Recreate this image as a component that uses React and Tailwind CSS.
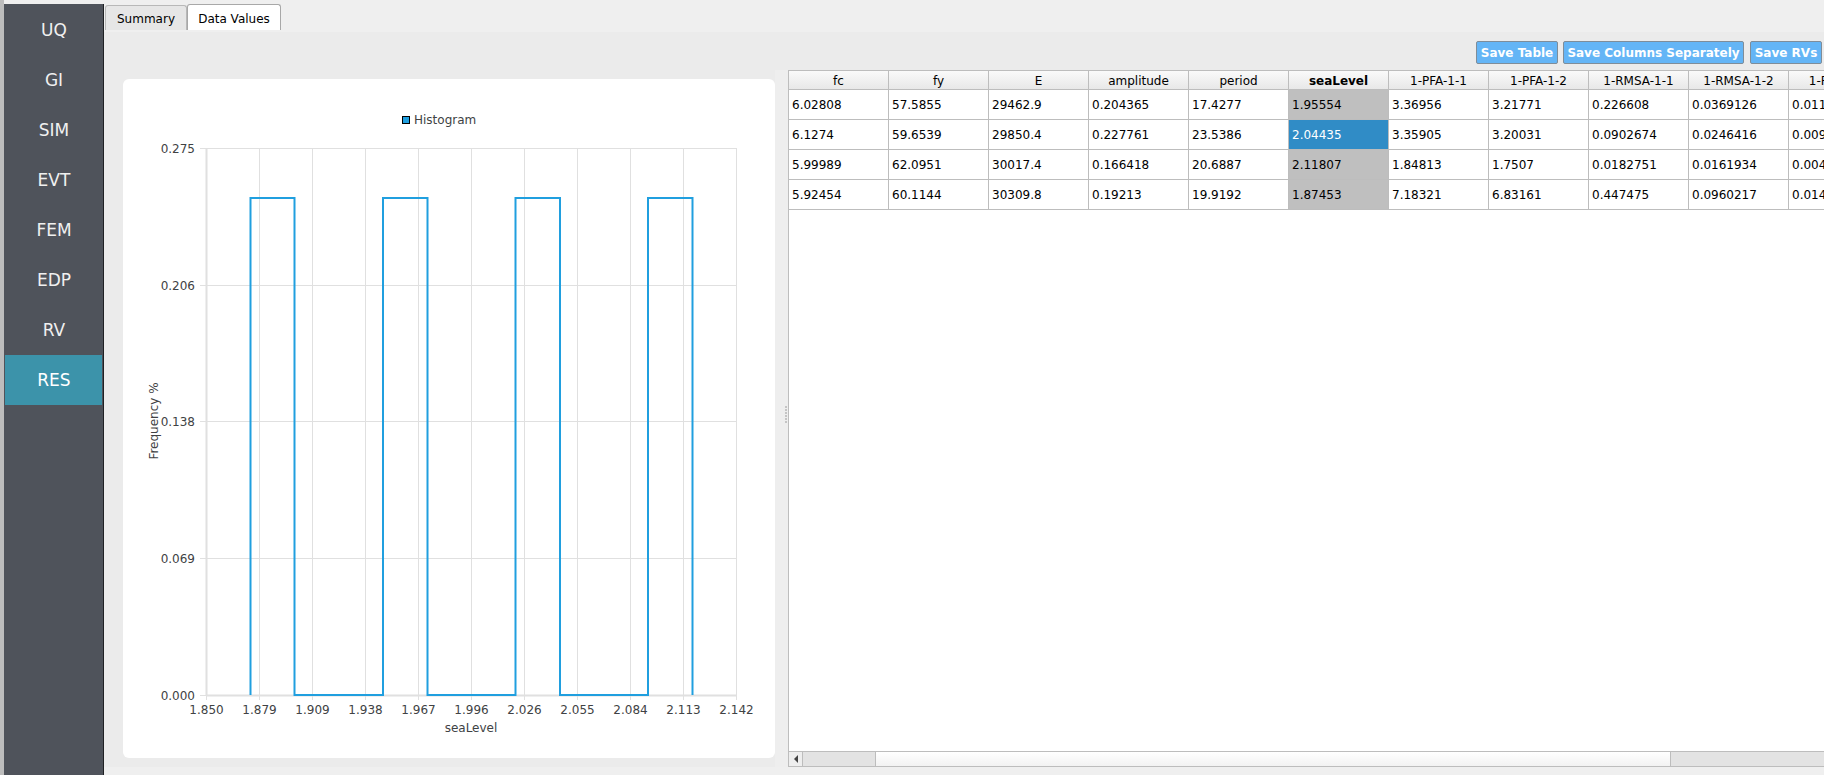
const font = { fontFamily: '"DejaVu Sans", sans-serif' };

const navItems = ['UQ', 'GI', 'SIM', 'EVT', 'FEM', 'EDP', 'RV', 'RES'];

const columns = ['fc', 'fy', 'E', 'amplitude', 'period', 'seaLevel', '1-PFA-1-1', '1-PFA-1-2', '1-RMSA-1-1', '1-RMSA-1-2', '1-PFD-1-1'];

const rows = [
  ['6.02808', '57.5855', '29462.9', '0.204365', '17.4277', '1.95554', '3.36956', '3.21771', '0.226608', '0.0369126', '0.0112'],
  ['6.1274', '59.6539', '29850.4', '0.227761', '23.5386', '2.04435', '3.35905', '3.20031', '0.0902674', '0.0246416', '0.0095'],
  ['5.99989', '62.0951', '30017.4', '0.166418', '20.6887', '2.11807', '1.84813', '1.7507', '0.0182751', '0.0161934', '0.0048'],
  ['5.92454', '60.1144', '30309.8', '0.19213', '19.9192', '1.87453', '7.18321', '6.83161', '0.447475', '0.0960217', '0.0143'],
];

const xTicks = ['1.850', '1.879', '1.909', '1.938', '1.967', '1.996', '2.026', '2.055', '2.084', '2.113', '2.142'];
const yTicks = [['0.275', 25], ['0.206', 162], ['0.138', 298], ['0.069', 435], ['0.000', 572]];

const buttons = [
  { label: 'Save Table', width: 'w-[82px]' },
  { label: 'Save Columns Separately', width: 'w-[181px] ml-[5px]' },
  { label: 'Save RVs', width: 'w-[72px] ml-[6px]' },
];

const Chart = () => (
  <svg width="652" height="679" viewBox="0 0 652 679" className="block" style={font}>
    <rect x="279.5" y="37.5" width="7" height="7" fill="#209fdf" stroke="#000" strokeWidth="1" />
    <text x="291" y="45" fontSize="12" fill="#404244">Histogram</text>

    {xTicks.map((t, i) => (
      <g key={t}>
        <line x1={83.5 + i * 53} x2={83.5 + i * 53} y1="69" y2="621" stroke="#e0e0e0" />
        <text x={83.5 + i * 53} y="635" fontSize="12" fill="#404244" textAnchor="middle">{t}</text>
      </g>
    ))}
    {yTicks.map(([t, y]) => (
      <g key={t}>
        <line x1="77" x2="613" y1={y + 44.5} y2={y + 44.5} stroke="#e0e0e0" />
        <text x="72" y={y + 49} fontSize="12" fill="#404244" textAnchor="end">{t}</text>
      </g>
    ))}
    <line x1="83.5" x2="83.5" y1="69" y2="616" stroke="#e0e0e0" strokeWidth="2" />
    <line x1="83" x2="613" y1="616.5" y2="616.5" stroke="#e0e0e0" strokeWidth="2" />

    <path
      d="M127.5 616V119H171.5V616H260V119H304.5V616H392.5V119H437V616H525V119H569.5V616"
      fill="none"
      stroke="#209fdf"
      strokeWidth="2"
    />

    <text x="348" y="653" fontSize="12" fill="#404244" textAnchor="middle">seaLevel</text>
    <text transform="translate(35 342) rotate(-90)" fontSize="12" fill="#404244" textAnchor="middle">Frequency %</text>
  </svg>
);

export default function App() {
  return (
    <div className="flex h-[775px] w-[1824px] overflow-hidden bg-[#efefef] text-[12px] text-black" style={font}>
      {/* left nav */}
      <div className="w-[4px] shrink-0 bg-[#bdbdbd]" />
      <div className="mt-[4px] flex w-[100px] shrink-0 flex-col border-r border-black/60 bg-[#4f535b] pt-[1px]">
        {navItems.map((item) => (
          <div
            key={item}
            className={`flex h-[50px] items-center justify-center pl-[1px] pt-[1px] text-[17px] ${item === 'RES' ? 'mx-px bg-[#3c93aa] text-white' : 'text-[#f0f0f0]'}`}
          >
            {item}
          </div>
        ))}
      </div>

      <div className="flex min-w-0 flex-1 flex-col">
        {/* tabs */}
        <div className="flex h-[32px] shrink-0 items-end pb-[2px] pl-[1px]">
          <div className="flex h-[25px] w-[82px] items-center justify-center rounded-t-[3px] border border-b-0 border-[#b8b8b8] bg-[#e6e6e6] pt-[2px]">
            Summary
          </div>
          <div className="flex h-[26px] w-[94px] items-center justify-center rounded-t-[3px] border border-b-0 border-[#a8a8a8] bg-white pt-[2px]">
            Data Values
          </div>
        </div>

        <div className="mb-[8px] flex min-h-0 flex-1 flex-col bg-[#ebebeb]">
          {/* save buttons */}
          <div className="flex h-[38px] shrink-0 items-end justify-end pb-[6px] pr-[2px]">
            {buttons.map(({ label, width }) => (
              <button
                key={label}
                className={`h-[23px] rounded-[2px] border border-[#7f8d99] bg-[#64b5f6] p-0 text-center text-[12px] font-bold text-white ${width}`}
              >
                {label}
              </button>
            ))}
          </div>

          <div className="flex min-h-0 flex-1">
            {/* chart card */}
            <div className="ml-[19px] mt-[9px] h-[679px] w-[652px] shrink-0 rounded-[6px] bg-white">
              <Chart />
            </div>

            {/* splitter */}
            <div className="flex w-[13px] shrink-0 flex-col items-end justify-center gap-[1px] bg-[#eeeeee] pb-[9px] pr-[1px]">
              {[0, 1, 2, 3, 4, 5].map((d) => (
                <div key={d} className="h-[2px] w-[2px] bg-[#c4c4c4]" />
              ))}
            </div>

            {/* table */}
            <div className="flex min-w-0 flex-1 flex-col overflow-hidden border border-r-0 border-[#bdbdbd] bg-white">
              <div className="min-h-0 flex-1 overflow-hidden">
                <table className="w-[1100px] table-fixed border-separate border-spacing-0 leading-[14px]">
                  <thead>
                    <tr>
                      {columns.map((c) => (
                        <th
                          key={c}
                          className={`h-[19px] w-[100px] border-r border-b border-[#bdbdbd] bg-gradient-to-b from-[#fafafa] to-[#e8e8e8] p-0 pt-[2px] text-center ${c === 'seaLevel' ? 'font-bold' : 'font-normal'}`}
                        >
                          {c}
                        </th>
                      ))}
                    </tr>
                  </thead>
                  <tbody>
                    {rows.map((r, i) => (
                      <tr key={r[0]}>
                        {r.map((v, j) => (
                          <td
                            key={j}
                            className={`h-[30px] w-[100px] overflow-hidden whitespace-nowrap border-r border-b border-[#bdbdbd] p-0 pl-[3px] pt-[1px] ${
                              j === 5 ? (i === 1 ? 'bg-[#308cc6] text-white' : 'bg-[#bfbfbf]') : ''
                            }`}
                          >
                            {v}
                          </td>
                        ))}
                      </tr>
                    ))}
                  </tbody>
                </table>
              </div>

              {/* horizontal scrollbar */}
              <div className="flex h-[15px] shrink-0 border-t border-[#bdbdbd] bg-[#e3e3e3]">
                <div className="flex w-[14px] shrink-0 items-center justify-center border-r border-[#bdbdbd] bg-[#eeeeee]">
                  <div className="h-0 w-0 border-y-[4px] border-r-[4px] border-y-transparent border-r-[#444]" />
                </div>
                <div className="w-[72px] shrink-0" />
                <div className="w-[796px] shrink-0 border-x border-[#bdbdbd] bg-gradient-to-b from-white to-[#f2f2f2]" />
              </div>
            </div>
          </div>
        </div>
      </div>
    </div>
  );
}
